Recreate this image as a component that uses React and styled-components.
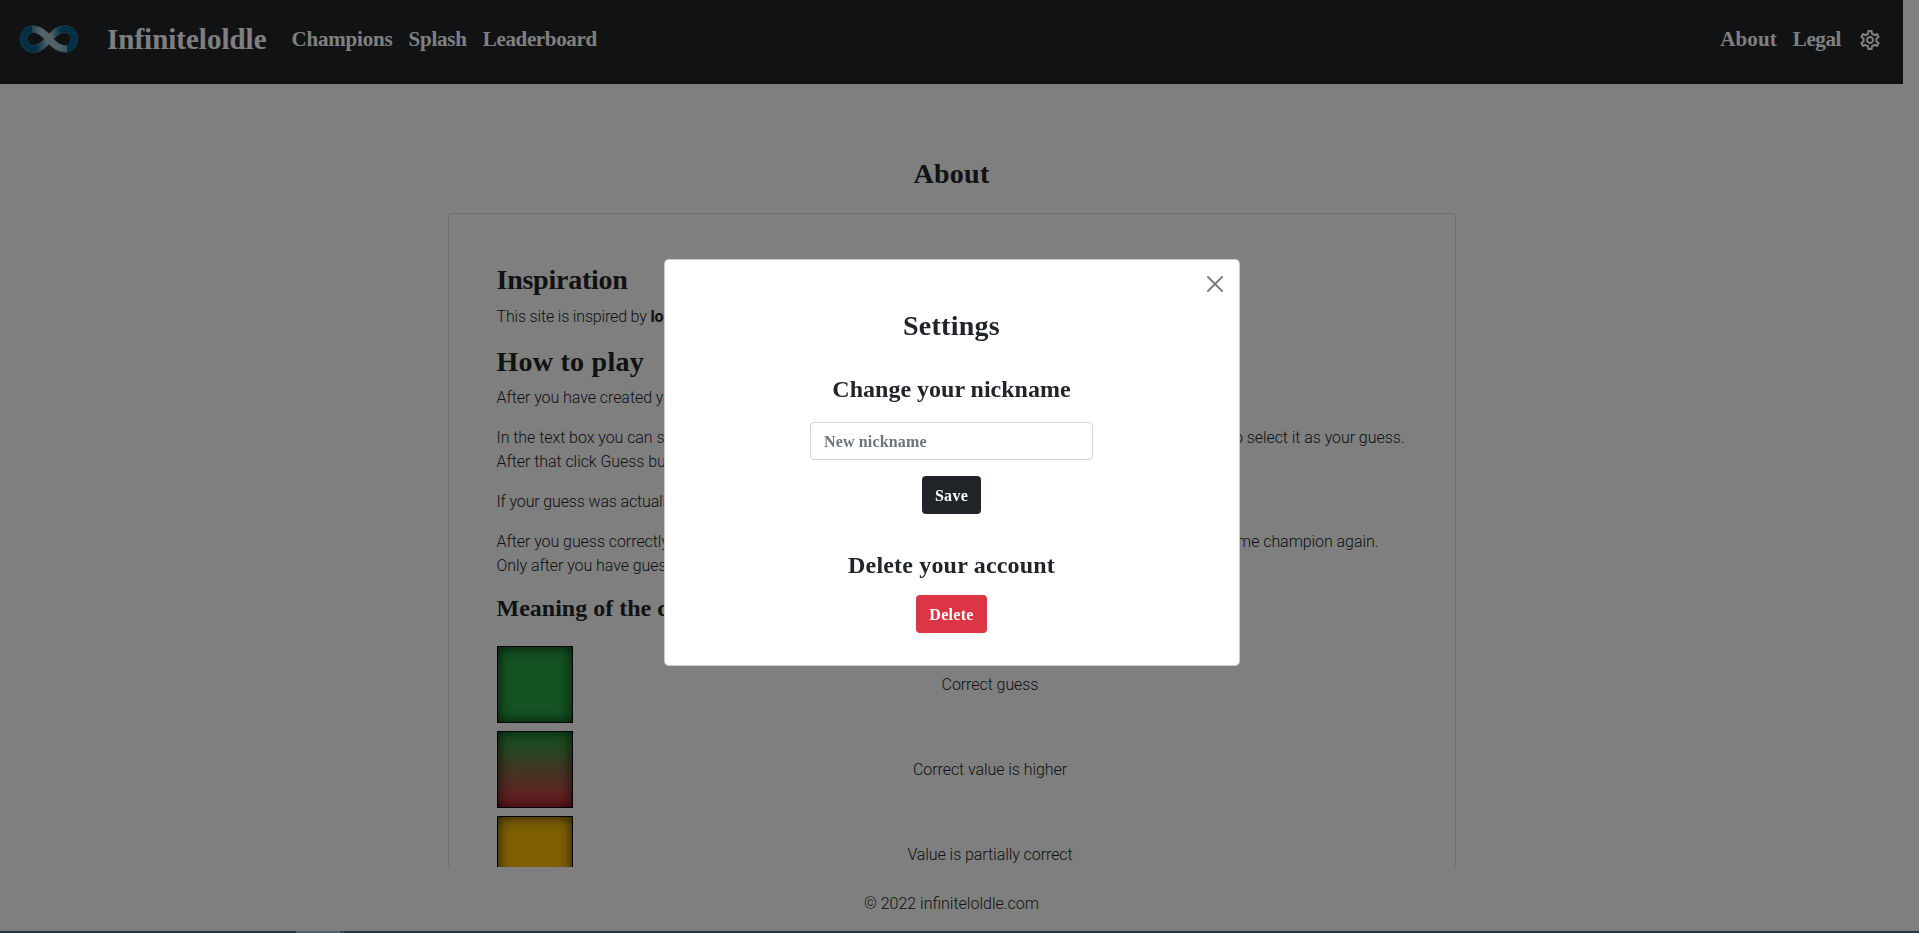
import React from "react";
import styled, { createGlobalStyle } from "styled-components";
import { MdOutlineSettings } from "react-icons/md";

const serif = `"Liberation Serif", serif`;
const sans = `Roboto, "Liberation Sans", sans-serif`;

const Global = createGlobalStyle`
  *, *::before, *::after { box-sizing: border-box; }
  html, body { margin: 0; height: 100%; overflow: hidden; background: #fff; }
  body { font: 300 16px/24px ${sans}; color: #212529; }
  h3, h4, p { margin: 0; }
`;

const Page = styled.div`
  height: 931px;
  padding-right: 16px;
  display: flex;
  flex-direction: column;
`;

const Navbar = styled.nav`
  flex: none;
  height: 84px;
  padding: 0 12px 6px 20px;
  display: flex;
  align-items: center;
  background: #212529;
  color: #fff;
  font-family: ${serif};
  font-weight: 700;
`;

const Logo = styled.svg`
  width: 58px;
  height: 28px;
`;

const Brand = styled.span`
  margin: 0 25px 0 29px;
  font-size: 29px;
  line-height: 40px;
  font-variant-ligatures: none;
`;

const NavLink = styled.a`
  margin-right: 16px;
  font-size: 21px;
  line-height: 30px;
  letter-spacing: ${(p) => p.$track || 0}px;
`;

const NavEnd = styled.div`
  margin-left: auto;
  display: flex;
  align-items: center;
`;

const GearButton = styled.button`
  width: 42px;
  height: 47px;
  margin-left: -8px;
  padding: 2px 0 0;
  border: 1px solid #24282c;
  border-radius: 4px;
  background: none;
  color: #fff;
  display: grid;
  place-items: center;
`;

const Main = styled.main`
  flex: 1;
  min-height: 0;
  overflow: hidden;
  display: flex;
  flex-direction: column;
  align-items: center;
`;

const Title = styled.h3`
  font: 700 28px/34px ${serif};
  letter-spacing: ${(p) => p.$track || 0}px;
`;

const Subtitle = styled.h4`
  font: 700 24px/29px ${serif};
  letter-spacing: ${(p) => p.$track || 0}px;
`;

const PageTitle = styled(Title)`
  margin: 73px 0 22px;
`;

const Card = styled.section`
  flex: none;
  width: 1008px;
  height: 900px;
  padding: 49px 48px 48px;
  border: 1px solid rgba(0, 0, 0, 0.125);
  border-radius: 4px;
`;

const Heading = styled(Title)`
  margin-bottom: ${(p) => p.$gap || 8}px;
`;

const Paragraph = styled.p`
  margin-bottom: 16px;
  letter-spacing: ${(p) => p.$track ?? -0.06}px;
  white-space: nowrap;
  b { font-weight: 700; }
`;

const Line = styled.span`
  display: flex;
  justify-content: space-between;
  width: ${(p) => p.$width}px;
`;

const Legend = styled.div`
  margin-top: 23px;
  display: flex;
  flex-direction: column;
  gap: 8px;
`;

const LegendRow = styled.div`
  height: 77px;
  display: grid;
  grid-template-columns: 76px 1fr;
  align-items: center;
  text-align: center;
  letter-spacing: -0.07px;
`;

const LegendLabel = styled.span`
  padding: 1px 0 0 1px;
`;

const Swatch = styled.div`
  height: 77px;
  border: 1px solid #000;
  background: ${(p) => p.$fill};
  box-shadow: inset 0 0 14px rgba(0, 0, 0, 0.75);
`;

const Footer = styled.footer`
  flex: none;
  height: 64px;
  padding-top: 25px;
  text-align: center;
`;

const Taskbar = styled.div`
  height: 2px;
  background: #223946;
  padding-left: 296px;
  position: relative;
  z-index: 2;
`;

const ActiveTask = styled.div`
  width: 48px;
  height: 2px;
  background: linear-gradient(90deg, #4f626e 44px, #2f4552 44px);
`;

const Backdrop = styled.div`
  position: fixed;
  inset: 0;
  z-index: 1;
  padding: 259px 16px 0 0;
  background: rgba(0, 0, 0, 0.5);
`;

const Dialog = styled.div`
  width: 576px;
  height: 407px;
  margin: 0 auto;
  padding: 49px 0 0;
  position: relative;
  display: flex;
  flex-direction: column;
  align-items: center;
  background: #fff;
  border: 1px solid rgba(0, 0, 0, 0.2);
  border-radius: 5px;
`;

const Close = styled.button`
  position: absolute;
  top: 16px;
  right: 16px;
  width: 16px;
  height: 16px;
  padding: 0;
  border: 0;
  background: none;
  opacity: 0.5;
  svg { display: block; }
`;

const NicknameTitle = styled(Subtitle)`
  margin-top: 32px;
`;

const DeleteTitle = styled(Subtitle)`
  margin: 37px 0 15px;
`;

const Field = styled.input`
  width: 283px;
  height: 38px;
  margin: 18px 0 16px;
  padding: 2px 12px 0 13px;
  border: 1px solid #ced4da;
  border-radius: 4px;
  font: 700 16px/24px ${serif};
  letter-spacing: 0.15px;
  &::placeholder { color: #6c757d; opacity: 1; }
`;

const Button = styled.button`
  width: ${(p) => p.$width}px;
  height: 38px;
  padding: 2px 0 0;
  border: 0;
  border-radius: 4px;
  background: ${(p) => (p.$danger ? "#dc3545" : "#212529")};
  color: #fff;
  font: 700 16px/24px ${serif};
  letter-spacing: 0.3px;
`;

const legend = [
  ["#28a745", "Correct guess"],
  ["linear-gradient(#28a745, #dc3545)", "Correct value is higher"],
  ["#ffc107", "Value is partially correct"],
];

function InfinityLogo() {
  return (
    <Logo viewBox="0 0 58 28" fill="none">
      <defs>
        <linearGradient id="band" x1="0" x2="58" y1="0" y2="0" gradientUnits="userSpaceOnUse">
          <stop offset="0" stopColor="#006090" />
          <stop offset="0.28" stopColor="#00608e" />
          <stop offset="0.46" stopColor="#9cc3cb" />
          <stop offset="0.54" stopColor="#9cc3cb" />
          <stop offset="0.72" stopColor="#00608e" />
          <stop offset="1" stopColor="#006090" />
        </linearGradient>
        <linearGradient id="over" x1="10" x2="50" y1="0" y2="0" gradientUnits="userSpaceOnUse">
          <stop offset="0" stopColor="#2f7c9c" />
          <stop offset="0.25" stopColor="#a3c6cc" />
          <stop offset="0.75" stopColor="#a3c6cc" />
          <stop offset="1" stopColor="#5c9db0" />
        </linearGradient>
      </defs>
      <path d="M29 14C24 8 19 4 13.500 4a10 10 0 0 0 0 20C19 24 24 20 29 14S39 4 44.500 4a10 10 0 0 1 0 20C39 24 34 20 29 14Z" stroke="#6d8791" strokeWidth="7.600" />
      <path d="M29 14C24 8 19 4 13.500 4a10 10 0 0 0 0 20C19 24 24 20 29 14S39 4 44.500 4a10 10 0 0 1 0 20C39 24 34 20 29 14Z" stroke="url(#band)" strokeWidth="6.600" />
      <path d="M12 4C19 4 24 8 29 14S39 24 47 24" stroke="url(#over)" strokeWidth="6.600" />
    </Logo>
  );
}

export default function App() {
  return (
    <>
      <Global />
      <Page>
        <Navbar>
          <InfinityLogo />
          <Brand>Infiniteloldle</Brand>
          <NavLink $track={-0.2}>Champions</NavLink>
          <NavLink $track={-0.2}>Splash</NavLink>
          <NavLink $track={-0.35}>Leaderboard</NavLink>
          <NavEnd>
            <NavLink $track={0.1}>About</NavLink>
            <NavLink $track={-0.4}>Legal</NavLink>
            <GearButton aria-label="Settings"><MdOutlineSettings size={24} /></GearButton>
          </NavEnd>
        </Navbar>
        <Main>
          <PageTitle $track={0.3}>About</PageTitle>
          <Card>
            <Heading $track={-0.25}>Inspiration</Heading>
            <Paragraph $track={-0.17}>This site is inspired by <b>loldle.net</b></Paragraph>
            <Heading $track={0.25} $gap={7}>How to play</Heading>
            <Paragraph>After you have created your account you can play</Paragraph>
            <Paragraph>
              <Line $width={908}><span>In the text box you can search for a champion</span><span>and click it to select it as your guess.</span></Line>
              After that click Guess button
            </Paragraph>
            <Paragraph $track={-0.15}>If your guess was actually correct you win</Paragraph>
            <Paragraph>
              <Line $width={882}><span>After you guess correctly a new one is picked</span><span>you can get the same champion again.</span></Line>
              Only after you have guessed all champions
            </Paragraph>
            <Subtitle>Meaning of the colors</Subtitle>
            <Legend>
              {legend.map(([fill, label]) => (
                <LegendRow key={label}>
                  <Swatch $fill={fill} />
                  <LegendLabel>{label}</LegendLabel>
                </LegendRow>
              ))}
            </Legend>
          </Card>
        </Main>
        <Footer>© 2022 infiniteloldle.com</Footer>
      </Page>
      <Taskbar><ActiveTask /></Taskbar>
      <Backdrop>
        <Dialog>
          <Close aria-label="Close">
            <svg width="16" height="16" viewBox="0 0 16 16" stroke="#000" strokeWidth="2" strokeLinecap="round">
              <path d="M1 1l14 14M15 1L1 15" />
            </svg>
          </Close>
          <Title $track={0.25}>Settings</Title>
          <NicknameTitle>Change your nickname</NicknameTitle>
          <Field placeholder="New nickname" />
          <Button $width={59}>Save</Button>
          <DeleteTitle $track={0.18}>Delete your account</DeleteTitle>
          <Button $width={71} $danger>Delete</Button>
        </Dialog>
      </Backdrop>
    </>
  );
}
